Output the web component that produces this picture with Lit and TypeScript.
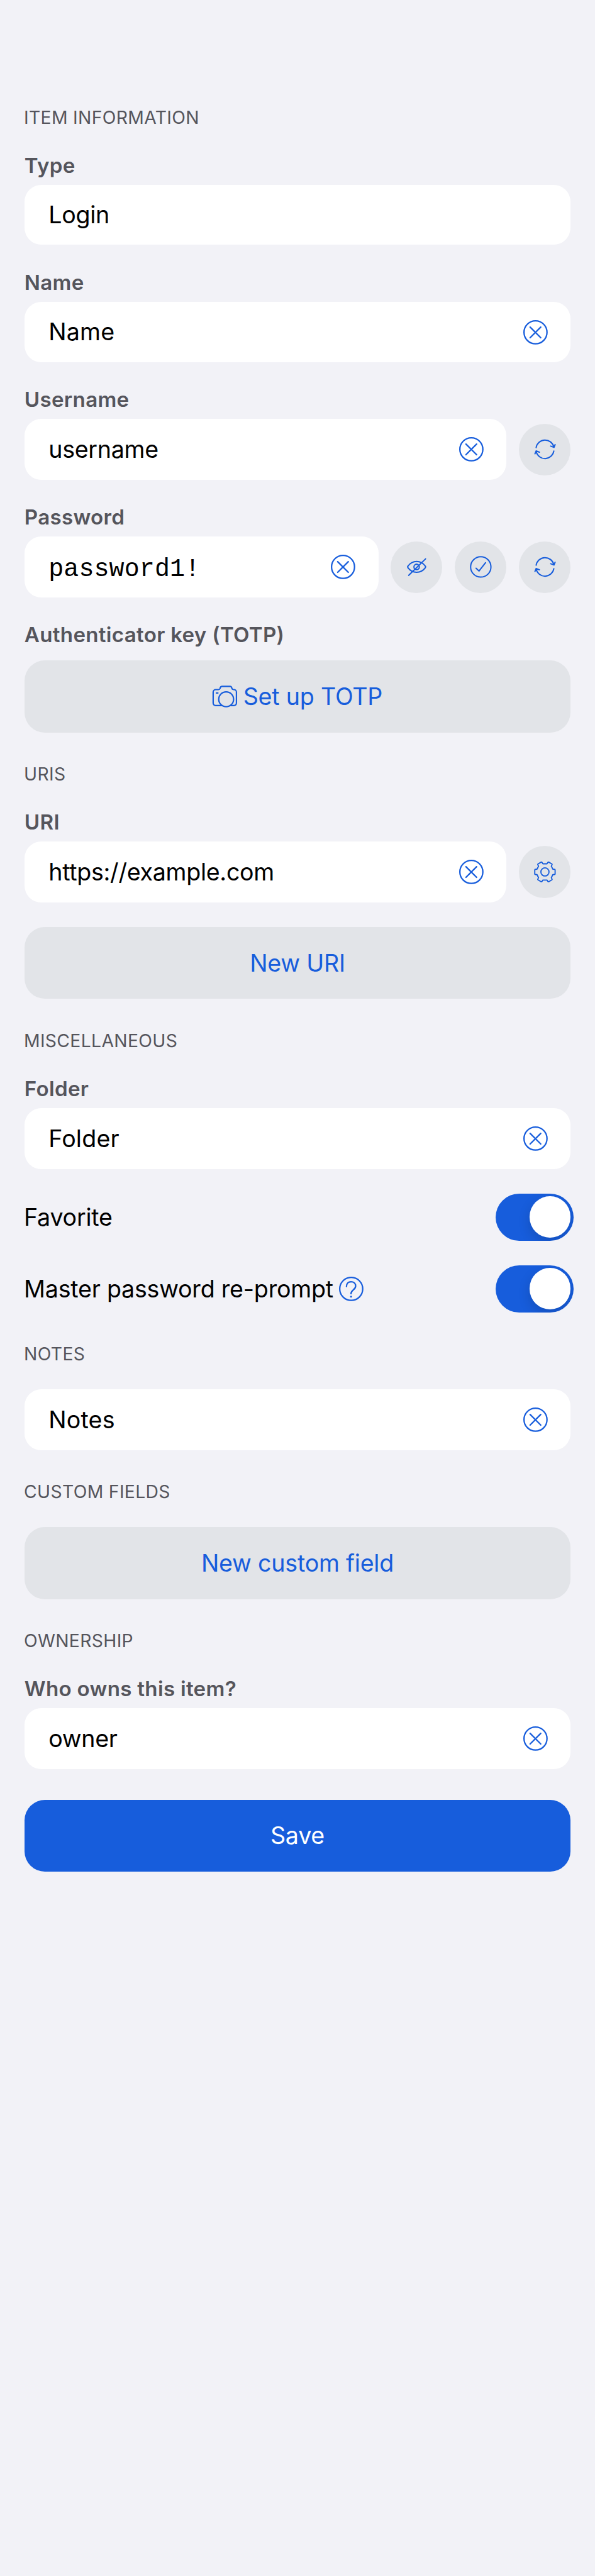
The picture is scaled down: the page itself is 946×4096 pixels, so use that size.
import { LitElement, html, css, svg, nothing, type TemplateResult } from "lit";

const icons: Record<string, TemplateResult> = {
  clear: svg`<circle cx="0" cy="0" r="22.6"/><path d="M-10.6-10.3 10.3 10.6M10.3-10.3-10.6 10.6"/>`,
  help: svg`<circle cx="0" cy="0" r="22.6"/><path d="M-9.3-4.6C-9.3-10.4-5.6-14-.4-14 4.8-14 8.7-10.8 8.7-5.6 8.7 2-.4 1.4-.4 9.4"/><circle class="dot" cx="-.3" cy="15.3" r="1.9"/>`,
  hidden: svg`<path d="M-17.2-1.4C-12.6-7.6-6.4-10.6 0-10.6S12.6-7.6 17.2-1.4Q18.4 0 17.2 1.4C12.6 7.6 6.4 10.6 0 10.6S-12.6 7.6-17.2 1.4Q-18.4 0-17.2-1.4Z"/><circle cx="0" cy="0" r="5.3"/><path d="M17.6-15.8-15.6 16.6"/>`,
  check: svg`<circle cx="0" cy="0" r="20"/><path d="M-9.3 2.6-3.4 8.1 9.4-8.3"/>`,
  sync: svg`<path d="M-17.3-3.4A17.7 17.7 0 0 1 17.4-4.6M11.4-6.2 17.8-3.7 20-9.2M17.5 3.4A17.7 17.7 0 0 1-17.2 4.6M-10.9 5.6-17.4 3.3-19.6 8.8"/>`,
  gear: svg`<circle cx="0" cy="0" r="8"/><path d="M6-19Q6.8-19.6 7.6-19.2L13.6-15.6Q14.5-15 14-14.2L12.6-11.2 15.6-5.4 18.6-5.1Q20-5 20-4V4Q20 5 18.6 5.1L15.6 5.4 12.6 11.2 14 14.2Q14.5 15 13.6 15.6L7.6 19.2Q6.8 19.6 6 19L4 16H-4L-6 19Q-6.8 19.6-7.6 19.2L-13.6 15.6Q-14.5 15-14 14.2L-12.6 11.2-15.6 5.4-18.6 5.1Q-20 5-20 4V-4Q-20-5-18.6-5.1L-15.6-5.4-12.6-11.2-14-14.2Q-14.5-15-13.6-15.6L-7.6-19.2Q-6.8-19.6-6-19L-4-16H4Z"/>`,
  camera: svg`<path d="M-6.4 17.8H-18A4.9 4.9 0 0 1-22.9 12.9V-8.6A4.9 4.9 0 0 1-18-13.5H-12.4Q-10-13.5-9.4-15.6-8.7-19.8-5.2-19.8H10Q13.4-19.8 14-15.6 14.6-13.5 17-13.5H18A4.9 4.9 0 0 1 22.9-8.6V12.9A4.9 4.9 0 0 1 18 17.8H12"/><circle cx="2.7" cy="5.6" r="14.6"/><path d="M-16.6-6.8H-13.6"/>`,
};

const icon = (name: string) =>
  html`<svg class="icon ${name}" viewBox="-24 -24 48 48">${icons[name]}</svg>`;

interface Field {
  label?: string;
  value: string;
  tone?: string;
  clearable?: boolean;
  actions?: string[];
}

const field = ({ label, value, tone = "", clearable = true, actions = [] }: Field) => html`
  <div class="field">
    ${label ? html`<div class="label">${label}</div>` : nothing}
    <div class="line">
      <div class="box ${clearable ? "" : "plain"}">
        <span class="value ${tone}">${value}</span>
        ${clearable ? icon("clear") : nothing}
      </div>
      ${actions.map((a) => html`<div class="round">${icon(a)}</div>`)}
    </div>
  </div>`;

const toggle = (label: string, help = false) => html`
  <div class="toggle-row">
    <span class="toggle-label">${label}</span>
    ${help ? icon("help") : nothing}
    <div class="track"><div class="thumb"></div></div>
  </div>`;

class AppRoot extends LitElement {
  static styles = css`
    :host {
      --u: 0.8087px;
      display: block;
      box-sizing: border-box;
      min-height: 4096px;
      padding: calc(206.9 * var(--u)) calc(48 * var(--u)) 0;
      background: #f2f2f7;
      font-family: Inter, "Liberation Sans", sans-serif;
      color: #000;
    }
    * { box-sizing: border-box; }
    .section { margin-bottom: calc(57.5 * var(--u)); }
    .section.last { margin-bottom: calc(60 * var(--u)); }
    .heading {
      height: calc(48 * var(--u));
      line-height: calc(50 * var(--u));
      margin: 0 0 calc(41 * var(--u)) calc(-1 * var(--u));
      font-size: calc(35 * var(--u));
      letter-spacing: calc(0.42 * var(--u));
      color: #55555c;
      white-space: nowrap;
    }
    .heading.wide { margin-bottom: calc(46 * var(--u)); }
    .label {
      height: calc(60 * var(--u));
      line-height: calc(60 * var(--u));
      margin-bottom: calc(8 * var(--u));
      font-size: calc(41 * var(--u));
      font-weight: 600;
      letter-spacing: calc(0.35 * var(--u));
      color: #55555c;
      white-space: nowrap;
    }
    .label.loose { margin-bottom: calc(20.2 * var(--u)); }
    .fields { display: flex; flex-direction: column; gap: calc(43.5 * var(--u)); }
    .line { display: flex; align-items: center; gap: calc(24 * var(--u)); }
    .box {
      flex: 1;
      display: flex;
      align-items: center;
      justify-content: space-between;
      height: calc(119.7 * var(--u));
      padding: 0 calc(45 * var(--u)) 0 calc(47.5 * var(--u));
      border-radius: calc(33 * var(--u));
      background: #fff;
    }
    .box.plain { height: calc(117.6 * var(--u)); }
    .value {
      padding-top: calc(2 * var(--u));
      font-size: calc(46.5 * var(--u));
      line-height: calc(60 * var(--u));
      letter-spacing: calc(0.25 * var(--u));
      white-space: nowrap;
    }
    .value.tight { letter-spacing: calc(-0.35 * var(--u)); }
    .value.mono {
      padding-top: calc(10 * var(--u));
      font-family: "Liberation Mono", monospace;
      font-size: calc(49.5 * var(--u));
      letter-spacing: calc(0.1 * var(--u));
    }
    .round {
      display: grid;
      place-items: center;
      width: calc(102 * var(--u));
      height: calc(102 * var(--u));
      border-radius: 50%;
      background: #e2e4e8;
    }
    .icon {
      display: block;
      flex: none;
      width: calc(48 * var(--u));
      height: calc(48 * var(--u));
      overflow: visible;
      fill: none;
      stroke: #175ddc;
      stroke-width: 2.8;
      stroke-linecap: round;
      stroke-linejoin: round;
    }
    .icon.hidden, .icon.check, .icon.sync { stroke-width: 2.5; }
    .icon.gear { stroke-width: 2.3; }
    .icon.camera { stroke-width: 2.7; }
    .dot { fill: #175ddc; stroke: none; }
    .button {
      display: flex;
      align-items: center;
      justify-content: center;
      gap: calc(12.5 * var(--u));
      height: calc(141.6 * var(--u));
      border-radius: calc(40 * var(--u));
      background: #e2e4e8;
      color: #175ddc;
      font-size: calc(46.5 * var(--u));
      letter-spacing: calc(-0.26 * var(--u));
      white-space: nowrap;
    }
    .button.primary { background: #175ddc; color: #fff; }
    .button.after { margin-top: calc(48 * var(--u)); }
    .toggle-row {
      display: flex;
      align-items: center;
      height: calc(92.8 * var(--u));
      margin: calc(48.2 * var(--u)) calc(-6 * var(--u)) 0 calc(-1 * var(--u));
    }
    .toggle-label {
      padding-top: calc(1 * var(--u));
      font-size: calc(46.5 * var(--u));
      letter-spacing: calc(-0.28 * var(--u));
      white-space: nowrap;
    }
    .icon.help { margin-left: calc(11 * var(--u)); }
    .track {
      width: calc(153 * var(--u));
      height: calc(92.8 * var(--u));
      margin-left: auto;
      padding: calc(6 * var(--u));
      display: flex;
      justify-content: flex-end;
      border-radius: calc(47 * var(--u));
      background: #175ddc;
      overflow: hidden;
    }
    .thumb {
      width: calc(80.8 * var(--u));
      height: calc(80.8 * var(--u));
      border-radius: 50%;
      background: #fff;
      box-shadow: 0 calc(9 * var(--u)) calc(24 * var(--u)) rgba(0, 0, 0, 0.15);
    }
  `;

  render() {
    return html`
      <div class="section">
        <div class="heading">ITEM INFORMATION</div>
        <div class="fields">
          ${field({ label: "Type", value: "Login", tone: "tight", clearable: false })}
          ${field({ label: "Name", value: "Name" })}
          ${field({ label: "Username", value: "username", tone: "tight", actions: ["sync"] })}
          ${field({ label: "Password", value: "password1!", tone: "mono", actions: ["hidden", "check", "sync"] })}
          <div>
            <div class="label loose">Authenticator key (TOTP)</div>
            <div class="button">${icon("camera")}<span>Set up TOTP</span></div>
          </div>
        </div>
      </div>
      <div class="section">
        <div class="heading">URIS</div>
        ${field({ label: "URI", value: "https://example.com", tone: "tight", actions: ["gear"] })}
        <div class="button after">New URI</div>
      </div>
      <div class="section">
        <div class="heading">MISCELLANEOUS</div>
        ${field({ label: "Folder", value: "Folder" })}
        ${toggle("Favorite")}
        ${toggle("Master password re-prompt", true)}
      </div>
      <div class="section">
        <div class="heading wide">NOTES</div>
        ${field({ value: "Notes" })}
      </div>
      <div class="section">
        <div class="heading wide">CUSTOM FIELDS</div>
        <div class="button">New custom field</div>
      </div>
      <div class="section last">
        <div class="heading">OWNERSHIP</div>
        ${field({ label: "Who owns this item?", value: "owner", tone: "tight" })}
      </div>
      <div class="button primary">Save</div>
    `;
  }
}
customElements.define("app-root", AppRoot);
